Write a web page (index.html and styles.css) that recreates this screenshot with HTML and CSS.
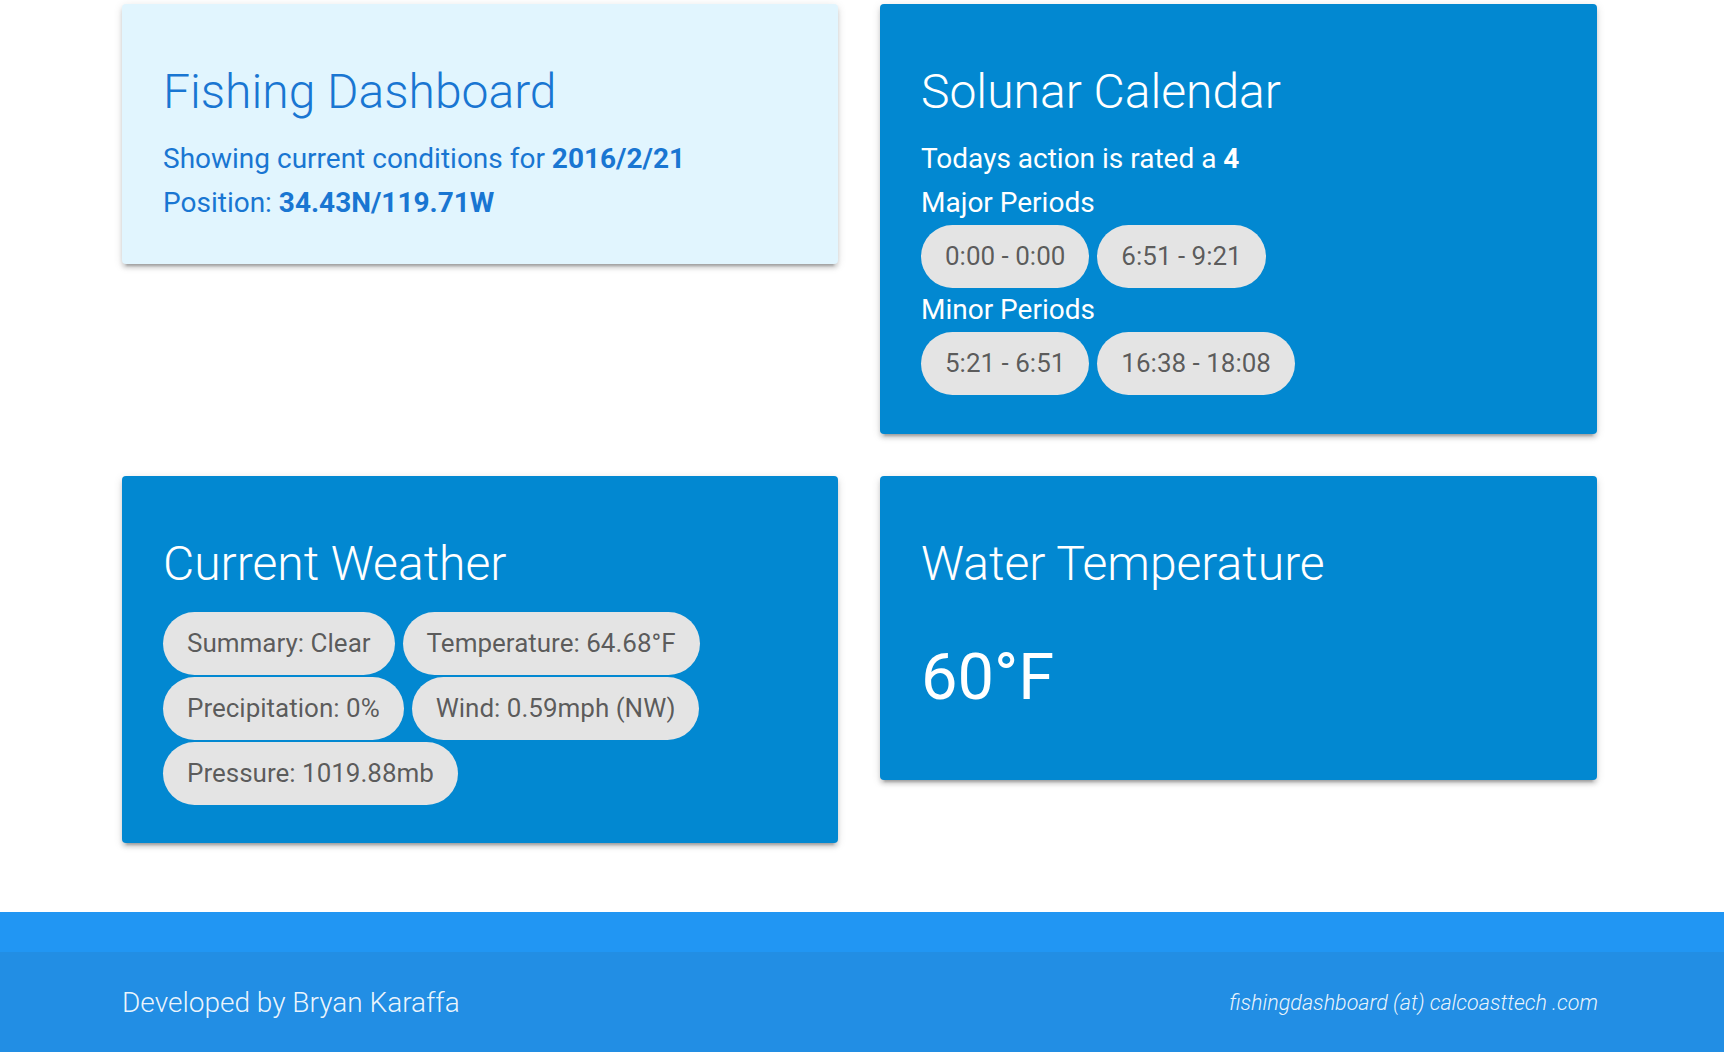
FILE: index.html
```html
<!DOCTYPE html>
<html lang="en">
<head>
<meta charset="utf-8">
<title>Fishing Dashboard</title>
<link rel="stylesheet" href="styles.css">
</head>
<body>
<main class="container">
  <div class="grid">
    <section class="card card-light">
      <h1 class="card-title">Fishing Dashboard</h1>
      <p class="line">Showing current conditions for <b>2016/2/21</b></p>
      <p class="line">Position: <b>34.43N/119.71W</b></p>
    </section>
    <section class="card card-blue">
      <h1 class="card-title">Solunar Calendar</h1>
      <p class="line">Todays action is rated a <b>4</b></p>
      <p class="line">Major Periods</p>
      <div class="chips">
        <span class="chip">0:00 - 0:00</span>
        <span class="chip">6:51 - 9:21</span>
      </div>
      <p class="line">Minor Periods</p>
      <div class="chips">
        <span class="chip">5:21 - 6:51</span>
        <span class="chip">16:38 - 18:08</span>
      </div>
    </section>
    <section class="card card-blue card-weather">
      <h1 class="card-title">Current Weather</h1>
      <div class="chips chips-wrap">
        <span class="chip">Summary: Clear</span>
        <span class="chip">Temperature: 64.68°F</span>
        <span class="chip">Precipitation: 0%</span>
        <span class="chip">Wind: 0.59mph (NW)</span>
        <span class="chip">Pressure: 1019.88mb</span>
      </div>
    </section>
    <section class="card card-blue">
      <h1 class="card-title">Water Temperature</h1>
      <p class="big">60°F</p>
    </section>
  </div>
</main>
<footer class="page-footer">
  <div class="footer-copyright">
    <div class="footer-inner">
      <span class="dev">Developed by Bryan Karaffa</span>
      <span class="contact">fishingdashboard (at) calcoasttech .com</span>
    </div>
  </div>
</footer>
</body>
</html>
```
FILE: styles.css
```css
html, body {
  margin: 0;
  padding: 0;
  background: #ffffff;
  font-family: Roboto, "Noto Sans", "Liberation Sans", sans-serif;
}

.container {
  width: 1475px;
  margin-left: 122px;
  padding-top: 4px;
}

.grid {
  display: grid;
  grid-template-columns: 716px 717px;
  column-gap: 42px;
  row-gap: 42px;
  align-items: start;
}

.card {
  border-radius: 4px;
  padding: 40px 41px 39px;
  box-shadow: 0 4px 4px 0 rgba(0,0,0,0.14), 0 2px 10px 0 rgba(0,0,0,0.12), 0 6px 2px -4px rgba(0,0,0,0.2);
}

.card-light {
  background: #e1f5fe;
  color: #1976d2;
}

.card-blue {
  background: #0288d1;
  color: #ffffff;
}

.card-weather {
  padding-bottom: 38px;
}

.card-title {
  margin: 22px 0 19px;
  font-size: 48px;
  line-height: 52px;
  font-weight: 300;
}

.line {
  margin: 0;
  font-size: 28px;
  line-height: 44px;
  font-weight: 400;
}

.line b {
  font-weight: 700;
}

.chips {
  display: flex;
  gap: 2px 8px;
}

.chips-wrap {
  flex-wrap: wrap;
  margin-top: 22px;
}

.chip {
  display: inline-block;
  height: 63px;
  line-height: 63px;
  padding: 0 24px;
  border-radius: 32px;
  background: #e4e4e4;
  color: rgba(0,0,0,0.62);
  font-size: 26px;
  white-space: nowrap;
}

.big {
  margin: 47px 0 24px;
  font-size: 65px;
  line-height: 80px;
  font-weight: 400;
}

.page-footer {
  margin-top: 69px;
  padding-top: 40px;
  background: #2196f3;
  margin-bottom: 8px;
}

.footer-copyright {
  height: 100px;
  background: rgba(51,51,51,0.08);
  display: flex;
  align-items: center;
}

.footer-inner {
  width: 1476px;
  margin-left: 122px;
  display: flex;
  justify-content: space-between;
  align-items: center;
  color: rgba(255,255,255,0.92);
}

.dev {
  font-size: 28px;
  font-weight: 300;
}

.contact {
  font-size: 21.5px;
  font-weight: 300;
  font-style: italic;
}
```
